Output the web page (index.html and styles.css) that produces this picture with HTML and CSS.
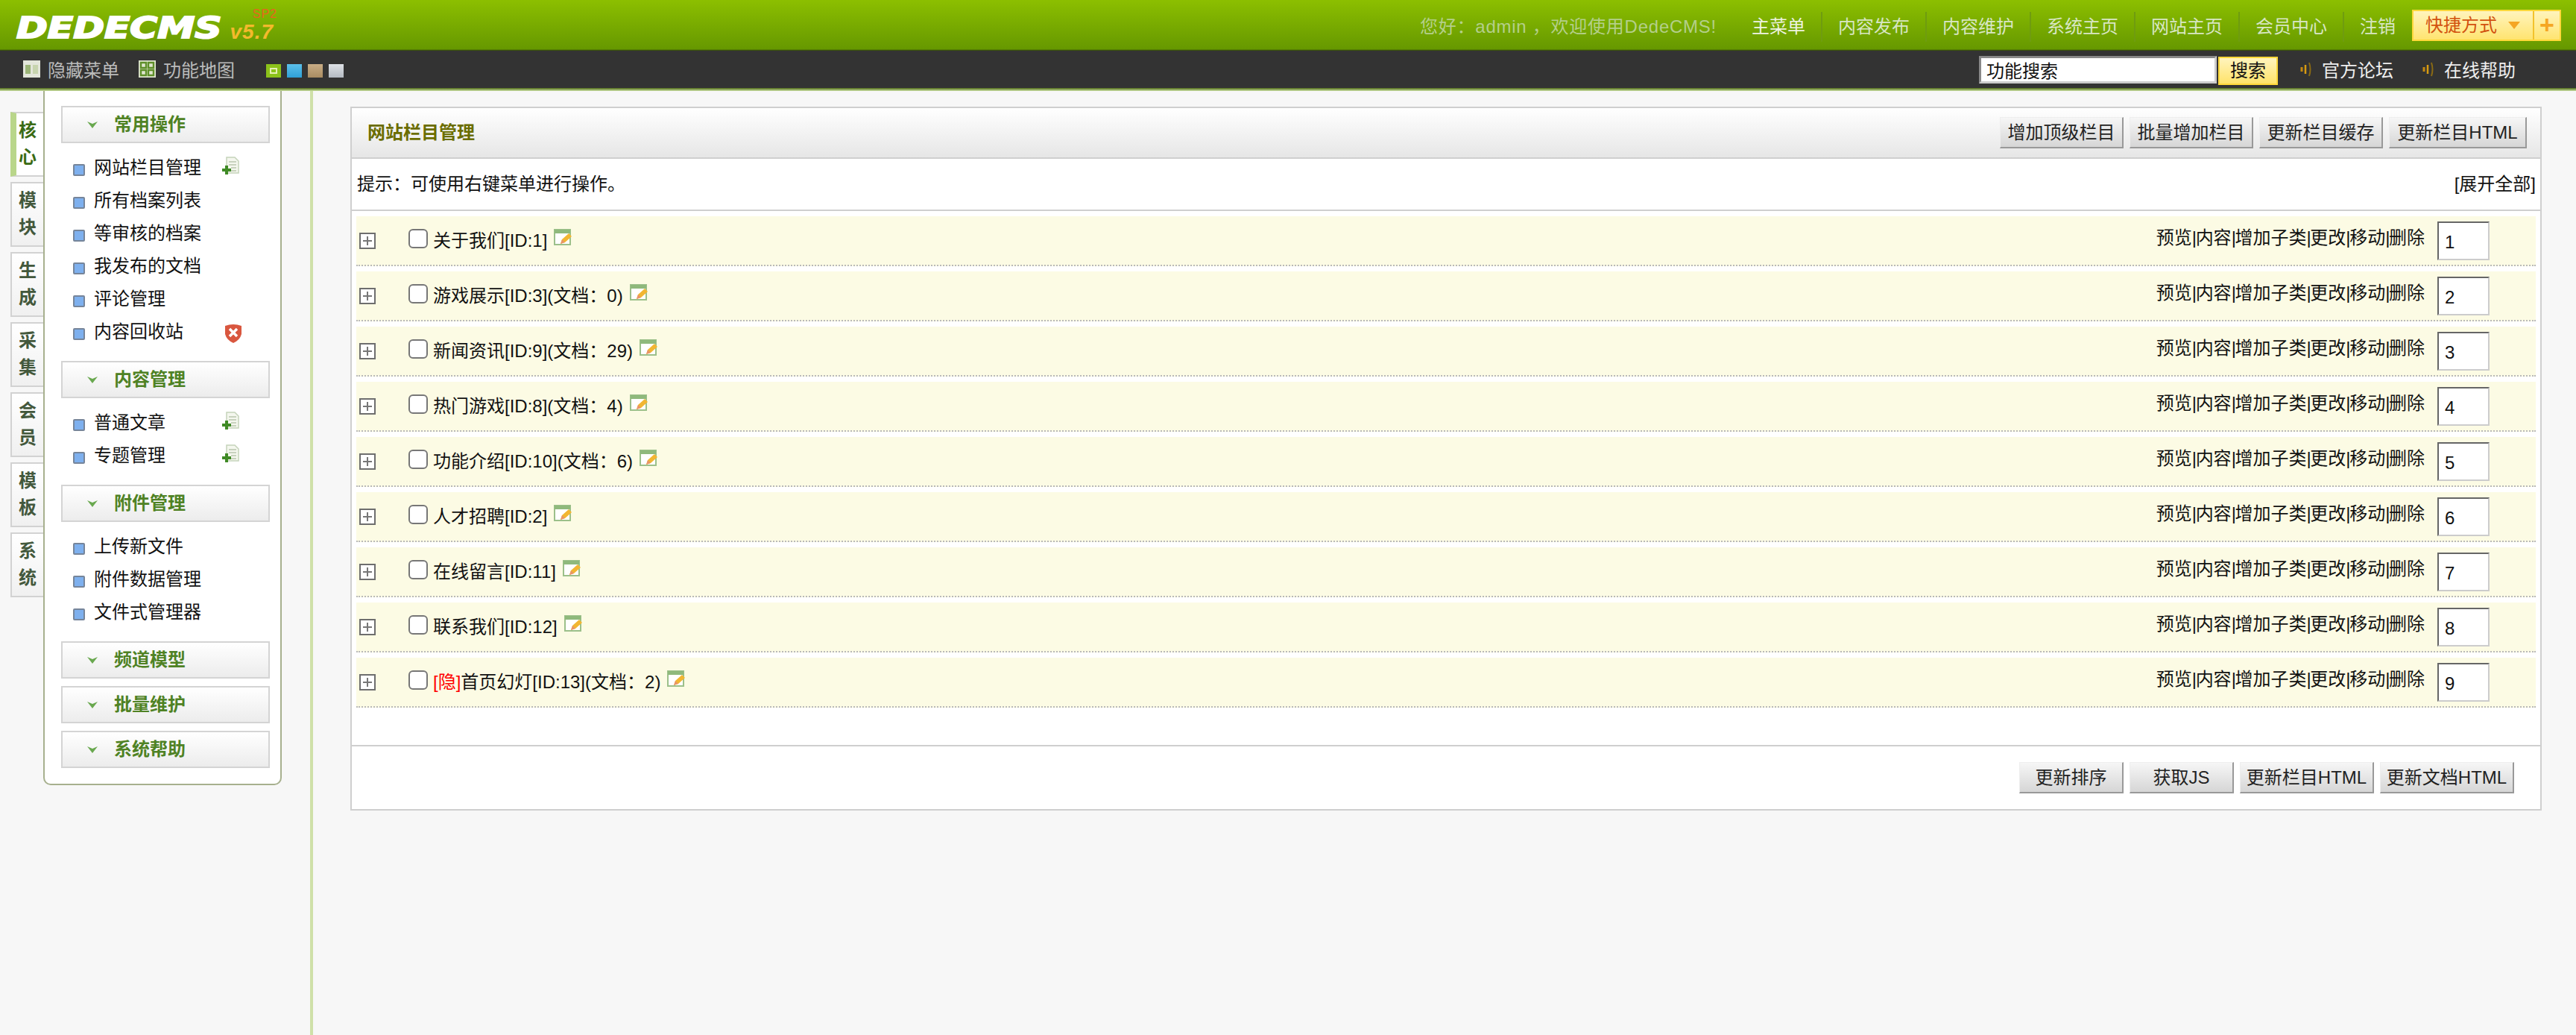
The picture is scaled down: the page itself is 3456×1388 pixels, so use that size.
FILE: index.html
```html
<!DOCTYPE html>
<html lang="zh-CN">
<head>
<meta charset="utf-8">
<title>DedeCMS</title>
<link rel="stylesheet" href="styles.css">
</head>
<body>
<svg class="defs" width="0" height="0" aria-hidden="true">
  <symbol id="i-add" viewBox="0 0 24 24">
    <path d="M6 1h11l5 5v16H6z" fill="#f4f7ee" stroke="#c5d3ba" stroke-width="1.5"/>
    <path d="M9 7h10M9 11h10M12 15h7M12 19h7" stroke="#b9c6ae" stroke-width="1.5"/>
    <path d="M4 12h4v4h4v4H8v4H4v-4H0v-4h4z" fill="#3f8a25"/>
  </symbol>
  <symbol id="i-del" viewBox="0 0 24 26">
    <path d="M1 3q11-4 22 0v11q-2 8-11 12Q3 22 1 14z" fill="#d9573f"/>
    <path d="M7 7l10 10M17 7L7 17" stroke="#fff" stroke-width="3.5"/>
  </symbol>
  <symbol id="i-edit" viewBox="0 0 24 24">
    <rect x="1" y="1" width="21" height="20" fill="#fff" stroke="#9cc08a" stroke-width="2"/>
    <rect x="1" y="1" width="21" height="5" fill="#8fb97c"/>
    <path d="M9 20l2-6 9-8 4 4-9 8z" fill="#f2b632"/>
    <path d="M9 20l2-6 4 4z" fill="#e8946a"/>
  </symbol>
  <symbol id="i-plus" viewBox="0 0 22 22">
    <rect x="1" y="1" width="20" height="20" fill="#fff" stroke="#6e6e6e" stroke-width="2"/>
    <path d="M11 5v12M5 11h12" stroke="#777" stroke-width="2"/>
  </symbol>
  <symbol id="i-hide" viewBox="0 0 23 23">
    <rect width="23" height="23" fill="#e3e6da"/>
    <rect x="3" y="6" width="7" height="12" fill="#9bb477"/>
    <rect x="13" y="6" width="7" height="12" fill="#c7d4ae"/>
  </symbol>
  <symbol id="i-map" viewBox="0 0 23 23">
    <rect width="23" height="23" fill="#dfe6cf"/>
    <path d="M3 3h7v7H3zM13 3h7v7h-7zM3 13h7v7H3zM13 13h7v7h-7z" fill="none" stroke="#5f8f2a" stroke-width="2.4"/>
  </symbol>
  <symbol id="i-sound" viewBox="0 0 16 20">
    <path d="M3 7v6" stroke="#c58a10" stroke-width="3"/>
    <path d="M8 4v12" stroke="#d89c12" stroke-width="2.5"/>
    <path d="M13 1q3 9 0 18" fill="none" stroke="#8a6a14" stroke-width="2"/>
  </symbol>
  <symbol id="i-caret" viewBox="0 0 14 10">
    <path d="M0 1l7 3 7-3-7 9z" fill="#69a84f"/>
  </symbol>
</svg>

<header class="top">
  <div class="logo">
    <span class="logo-word">DEDECMS</span>
    <span class="logo-ver"><span class="logo-sp">SP2</span><span class="logo-num">v5.7</span></span>
  </div>
  <nav class="top-nav">
    <span class="welcome">您好：admin ，欢迎使用DedeCMS!</span>
    <a class="nav-item nav-first">主菜单</a>
    <a class="nav-item">内容发布</a>
    <a class="nav-item">内容维护</a>
    <a class="nav-item">系统主页</a>
    <a class="nav-item">网站主页</a>
    <a class="nav-item">会员中心</a>
    <a class="nav-item">注销</a>
    <div class="shortcut">
      <span class="shortcut-main">快捷方式<i class="shortcut-arrow"></i></span>
      <span class="shortcut-plus">+</span>
    </div>
  </nav>
</header>

<div class="bar">
  <div class="bar-left">
    <span class="bar-tool"><svg class="ico23"><use href="#i-hide"/></svg>隐藏菜单</span>
    <span class="bar-tool"><svg class="ico23"><use href="#i-map"/></svg>功能地图</span>
    <div class="swatches">
      <i class="swatch sw-green"></i><i class="swatch sw-blue"></i><i class="swatch sw-tan"></i><i class="swatch sw-grey"></i>
    </div>
  </div>
  <div class="bar-right">
    <input class="search-input" type="text" value="功能搜索">
    <button class="search-btn">搜索</button>
    <span class="bar-link"><svg class="ico16"><use href="#i-sound"/></svg>官方论坛</span>
    <span class="bar-link"><svg class="ico16"><use href="#i-sound"/></svg>在线帮助</span>
  </div>
</div>
<div class="bar-fade"></div>

<div class="main">
  <div class="tabs">
    <div class="tab tab-on">核<br>心</div>
    <div class="tab">模<br>块</div>
    <div class="tab">生<br>成</div>
    <div class="tab">采<br>集</div>
    <div class="tab">会<br>员</div>
    <div class="tab">模<br>板</div>
    <div class="tab">系<br>统</div>
  </div>

  <aside class="side">
    <div class="side-head"><svg class="caret"><use href="#i-caret"/></svg>常用操作</div>
    <ul class="side-list">
      <li class="side-item"><span class="side-label">网站栏目管理</span><svg class="side-ico"><use href="#i-add"/></svg></li>
      <li class="side-item"><span class="side-label">所有档案列表</span></li>
      <li class="side-item"><span class="side-label">等审核的档案</span></li>
      <li class="side-item"><span class="side-label">我发布的文档</span></li>
      <li class="side-item"><span class="side-label">评论管理</span></li>
      <li class="side-item"><span class="side-label">内容回收站</span><svg class="side-ico side-ico-del"><use href="#i-del"/></svg></li>
    </ul>
    <div class="side-head"><svg class="caret"><use href="#i-caret"/></svg>内容管理</div>
    <ul class="side-list">
      <li class="side-item"><span class="side-label">普通文章</span><svg class="side-ico"><use href="#i-add"/></svg></li>
      <li class="side-item"><span class="side-label">专题管理</span><svg class="side-ico"><use href="#i-add"/></svg></li>
    </ul>
    <div class="side-head"><svg class="caret"><use href="#i-caret"/></svg>附件管理</div>
    <ul class="side-list">
      <li class="side-item"><span class="side-label">上传新文件</span></li>
      <li class="side-item"><span class="side-label">附件数据管理</span></li>
      <li class="side-item"><span class="side-label">文件式管理器</span></li>
    </ul>
    <div class="side-head side-closed"><svg class="caret"><use href="#i-caret"/></svg>频道模型</div>
    <div class="side-head side-closed"><svg class="caret"><use href="#i-caret"/></svg>批量维护</div>
    <div class="side-head"><svg class="caret"><use href="#i-caret"/></svg>系统帮助</div>
  </aside>

  <div class="divider"></div>

  <main class="content">
    <section class="panel">
      <div class="panel-title">
        <h1 class="panel-name">网站栏目管理</h1>
        <div class="btns">
          <button class="btn btn-166">增加顶级栏目</button>
          <button class="btn btn-166">批量增加栏目</button>
          <button class="btn btn-166">更新栏目缓存</button>
          <button class="btn btn-185">更新栏目HTML</button>
        </div>
      </div>
      <div class="tip"><span>提示：可使用右键菜单进行操作。</span><span>[展开全部]</span></div>
      <div class="rows">
        <div class="row"><svg class="expand"><use href="#i-plus"/></svg><input class="check" type="checkbox"><span class="row-name">关于我们[ID:1]</span><svg class="edit"><use href="#i-edit"/></svg><span class="ops">预览<b class="sep">|</b>内容<b class="sep">|</b>增加子类<b class="sep">|</b>更改<b class="sep">|</b>移动<b class="sep">|</b>删除</span><input class="order" type="text" value="1"></div>
        <div class="row"><svg class="expand"><use href="#i-plus"/></svg><input class="check" type="checkbox"><span class="row-name">游戏展示[ID:3](文档：0)</span><svg class="edit"><use href="#i-edit"/></svg><span class="ops">预览<b class="sep">|</b>内容<b class="sep">|</b>增加子类<b class="sep">|</b>更改<b class="sep">|</b>移动<b class="sep">|</b>删除</span><input class="order" type="text" value="2"></div>
        <div class="row"><svg class="expand"><use href="#i-plus"/></svg><input class="check" type="checkbox"><span class="row-name">新闻资讯[ID:9](文档：29)</span><svg class="edit"><use href="#i-edit"/></svg><span class="ops">预览<b class="sep">|</b>内容<b class="sep">|</b>增加子类<b class="sep">|</b>更改<b class="sep">|</b>移动<b class="sep">|</b>删除</span><input class="order" type="text" value="3"></div>
        <div class="row"><svg class="expand"><use href="#i-plus"/></svg><input class="check" type="checkbox"><span class="row-name">热门游戏[ID:8](文档：4)</span><svg class="edit"><use href="#i-edit"/></svg><span class="ops">预览<b class="sep">|</b>内容<b class="sep">|</b>增加子类<b class="sep">|</b>更改<b class="sep">|</b>移动<b class="sep">|</b>删除</span><input class="order" type="text" value="4"></div>
        <div class="row"><svg class="expand"><use href="#i-plus"/></svg><input class="check" type="checkbox"><span class="row-name">功能介绍[ID:10](文档：6)</span><svg class="edit"><use href="#i-edit"/></svg><span class="ops">预览<b class="sep">|</b>内容<b class="sep">|</b>增加子类<b class="sep">|</b>更改<b class="sep">|</b>移动<b class="sep">|</b>删除</span><input class="order" type="text" value="5"></div>
        <div class="row"><svg class="expand"><use href="#i-plus"/></svg><input class="check" type="checkbox"><span class="row-name">人才招聘[ID:2]</span><svg class="edit"><use href="#i-edit"/></svg><span class="ops">预览<b class="sep">|</b>内容<b class="sep">|</b>增加子类<b class="sep">|</b>更改<b class="sep">|</b>移动<b class="sep">|</b>删除</span><input class="order" type="text" value="6"></div>
        <div class="row"><svg class="expand"><use href="#i-plus"/></svg><input class="check" type="checkbox"><span class="row-name">在线留言[ID:11]</span><svg class="edit"><use href="#i-edit"/></svg><span class="ops">预览<b class="sep">|</b>内容<b class="sep">|</b>增加子类<b class="sep">|</b>更改<b class="sep">|</b>移动<b class="sep">|</b>删除</span><input class="order" type="text" value="7"></div>
        <div class="row"><svg class="expand"><use href="#i-plus"/></svg><input class="check" type="checkbox"><span class="row-name">联系我们[ID:12]</span><svg class="edit"><use href="#i-edit"/></svg><span class="ops">预览<b class="sep">|</b>内容<b class="sep">|</b>增加子类<b class="sep">|</b>更改<b class="sep">|</b>移动<b class="sep">|</b>删除</span><input class="order" type="text" value="8"></div>
        <div class="row"><svg class="expand"><use href="#i-plus"/></svg><input class="check" type="checkbox"><span class="row-name"><span class="hidden-mark">[隐]</span>首页幻灯[ID:13](文档：2)</span><svg class="edit"><use href="#i-edit"/></svg><span class="ops">预览<b class="sep">|</b>内容<b class="sep">|</b>增加子类<b class="sep">|</b>更改<b class="sep">|</b>移动<b class="sep">|</b>删除</span><input class="order" type="text" value="9"></div>
      </div>
      <div class="panel-foot">
        <button class="btn btn-139">更新排序</button>
        <button class="btn btn-139">获取JS</button>
        <button class="btn btn-180">更新栏目HTML</button>
        <button class="btn btn-180">更新文档HTML</button>
      </div>
    </section>
  </main>
</div>
</body>
</html>
```
FILE: styles.css
```css
* { box-sizing: border-box; }
html, body { margin: 0; height: 100%; overflow: hidden; }
body {
  display: flex;
  flex-direction: column;
  background: #f7f7f7;
  color: #111;
  font: 24px/32px "Liberation Sans", "Noto Sans CJK SC", sans-serif;
}
.defs { position: absolute; }

/* top band */
.top {
  height: 68px;
  flex: none;
  display: flex;
  justify-content: space-between;
  align-items: center;
  background: linear-gradient(#8cbf00 0, #669800 66px, #2b3a10 68px);
}
.logo { display: flex; align-items: flex-end; padding-left: 22px; height: 58px; }
.logo-word {
  width: 285px;
  font: italic bold 39px/50px "DejaVu Sans", sans-serif;
  color: #fff;
  -webkit-text-stroke: 2px #fff;
  transform: scaleX(1.29);
  transform-origin: left center;
  white-space: nowrap;
}
.logo-ver { display: flex; flex-direction: column; align-items: flex-end; width: 62px; margin-left: -2px; }
.logo-sp { font-size: 16px; line-height: 16px; color: #e8641e; letter-spacing: 1px; margin-top: -6px; margin-right: -5px; }
.logo-num { font: italic bold 28px/32px "Liberation Sans", sans-serif; color: #f3b92c; letter-spacing: 1px; margin-bottom: 4px; }
.top-nav { display: flex; align-items: center; padding-right: 20px; }
.welcome { color: #b4cf8a; margin-right: 26px; letter-spacing: .75px; white-space: pre; margin-top: 4px; }
.nav-item {
  padding: 0 21px;
  color: #d8e6c4;
  border-left: 2px solid #6f9c10;
  line-height: 40px;
  margin-top: 4px;
}
.nav-first { border-left: 0; color: #eef3e2; }
.shortcut {
  display: flex;
  width: 200px;
  height: 42px;
  margin-left: 1px;
  border: 2px solid #ffd83a;
  background: linear-gradient(#fff4bd, #ffe470);
  color: #d2520f;
  line-height: 38px;
}
.shortcut-main {
  width: 162px;
  padding-left: 16px;
  border-right: 2px solid #f2c22c;
  display: flex;
  align-items: center;
  gap: 15px;
}
.shortcut-arrow {
  width: 0;
  height: 0;
  border: 8px solid transparent;
  border-top: 10px solid #f5a623;
  border-bottom: 0;
}
.shortcut-plus { flex: 1; text-align: center; font: bold 34px/36px "Liberation Sans", sans-serif; color: #f5a623; }

/* dark tool bar */
.bar {
  height: 50px;
  flex: none;
  display: flex;
  justify-content: space-between;
  align-items: center;
  background: #333;
  padding: 4px 81px 0 31px;
}
.bar-fade { height: 4px; flex: none; background: linear-gradient(#4f6a18, #c9dfa0); }
.bar-left, .bar-right { display: flex; align-items: center; }
.bar-tool { display: flex; align-items: center; gap: 10px; color: #bbb; margin-right: 26px; }
.ico23 { width: 23px; height: 23px; margin-top: -6px; }
.swatches { display: flex; gap: 8px; margin-left: 16px; }
.swatch { width: 20px; height: 18px; }
.sw-green { background: #8cc21a; box-shadow: inset 0 0 0 5px #8cc21a, inset 0 0 0 7px #e6f0b4; }
.sw-blue { background: linear-gradient(#5cc0ea, #2fa0d6); }
.sw-tan { background: linear-gradient(#c9ad85, #a98c62); }
.sw-grey { background: linear-gradient(#dfe2e6, #b4bac2); }
.search-input {
  width: 319px;
  height: 37px;
  margin-top: -3px;
  padding: 0 7px;
  border: 3px solid #888;
  border-right-color: #ccc;
  border-bottom-color: #ccc;
  background: #fff;
  color: #111;
  font: inherit;
  line-height: 31px;
}
.search-btn {
  width: 80px;
  height: 38px;
  margin-left: 2px;
  padding: 0;
  border: 2px solid #ffd83a;
  background: linear-gradient(#fff4bd, #ffe36a);
  color: #111;
  font: inherit;
}
.bar-link { display: flex; align-items: center; gap: 14px; color: #eee; margin-left: 29px; }
.bar-link + .bar-link { margin-left: 38px; }
.ico16 { width: 16px; height: 20px; margin-top: -4px; }

/* body columns */
.main { flex: 1; display: flex; min-height: 0; }
.tabs { width: 58px; flex: none; padding: 28px 0 0 14px; display: flex; flex-direction: column; gap: 7px; }
.tab {
  height: 87px;
  padding: 5px 0 0 9px;
  border: 2px solid #d2d2d2;
  border-right: 0;
  background: linear-gradient(#fff, #f0f0f0);
  color: #43583c;
  font-weight: bold;
  line-height: 36px;
}
.tab-on { background: #fff; border-left: 8px solid #b9d68a; padding-left: 3px; color: #3a6b14; }

.side {
  width: 320px;
  flex: none;
  align-self: flex-start;
  padding: 20px 14px 21px 22px;
  background: #fff;
  border: 2px solid #a7b08e;
  border-top: 0;
  border-radius: 0 0 10px 10px;
}
.side-head {
  height: 50px;
  display: flex;
  align-items: center;
  padding-left: 33px;
  border: 2px solid #d4d4d4;
  background: linear-gradient(#fff, #ececec);
  color: #4f8224;
  font-weight: bold;
}
.side-closed { margin-bottom: 10px; }
.caret { width: 14px; height: 10px; margin-right: 22px; }
.side-list { list-style: none; margin: 0; padding: 11px 0 17px 16px; }
.side-item { height: 44px; display: flex; align-items: center; color: #111; }
.side-item::before {
  content: "";
  width: 12px;
  height: 12px;
  margin: 5px 12px 0 0;
  background: #7eb0ee;
  border: 2px solid #76859a;
  border-radius: 2px;
}
.side-label { width: 172px; }
.side-ico { width: 24px; height: 24px; margin-top: -7px; }
.side-ico-del { height: 26px; margin-top: 4px; margin-left: 3px; }

.divider { width: 4px; flex: none; margin-left: 38px; background: #cfe0a8; }

/* content */
.content { flex: 1; min-width: 0; padding: 21px 46px 0 50px; }
.panel { border: 2px solid #cfcfcf; background: #fff; }
.panel-title {
  height: 68px;
  display: flex;
  justify-content: space-between;
  align-items: center;
  padding: 0 18px 0 21px;
  border-bottom: 2px solid #cfcfcf;
  background: linear-gradient(#fff, #e6e6e6);
}
.panel-name { margin: 0; font-size: 24px; font-weight: bold; color: #6b6d00; }
.btns { display: flex; gap: 8px; }
.btn {
  height: 42px;
  padding: 0;
  border: 1px solid #eee;
  border-right: 2px solid #999;
  border-bottom: 2px solid #999;
  background: linear-gradient(#f6f6f6, #d6d6d6);
  color: #222;
  font: inherit;
}
.btn-166 { width: 166px; }
.btn-185 { width: 185px; }
.btn-139 { width: 140px; }
.btn-180 { width: 180px; }
.tip {
  height: 70px;
  display: flex;
  justify-content: space-between;
  align-items: center;
  padding: 0 6px 0 7px;
  border-bottom: 2px solid #cfcfcf;
}
.rows { padding: 7px 6px 0; display: flex; flex-direction: column; gap: 7px; }
.row {
  height: 67px;
  display: flex;
  align-items: center;
  padding: 0 62px 0 4px;
  background: #fcfbe4;
  border-bottom: 2px dotted #b9b9b9;
}
.expand { width: 22px; height: 22px; margin-right: 44px; }
.check {
  appearance: none;
  width: 26px;
  height: 26px;
  margin: 0 7px 6px 0;
  background: #fff;
  border: 2px solid #777;
  border-radius: 6px;
}
.row-name { white-space: nowrap; }
.hidden-mark { color: #f00; }
.edit { width: 24px; height: 24px; margin: 0 0 8px 9px; }
.ops { margin: 0 17px 8px auto; white-space: nowrap; }
.sep { font-weight: normal; letter-spacing: -1.4px; }
.order {
  width: 70px;
  height: 52px;
  padding: 4px 8px 0;
  border: 2px solid #ccc;
  border-top-color: #666;
  border-left-color: #666;
  background: #fff;
  color: #111;
  font: 24px "Liberation Sans", sans-serif;
}
.panel-foot {
  margin-top: 50px;
  height: 86px;
  padding: 21px 35px 0 0;
  border-top: 2px solid #cfcfcf;
  display: flex;
  justify-content: flex-end;
  gap: 8px;
}
```
